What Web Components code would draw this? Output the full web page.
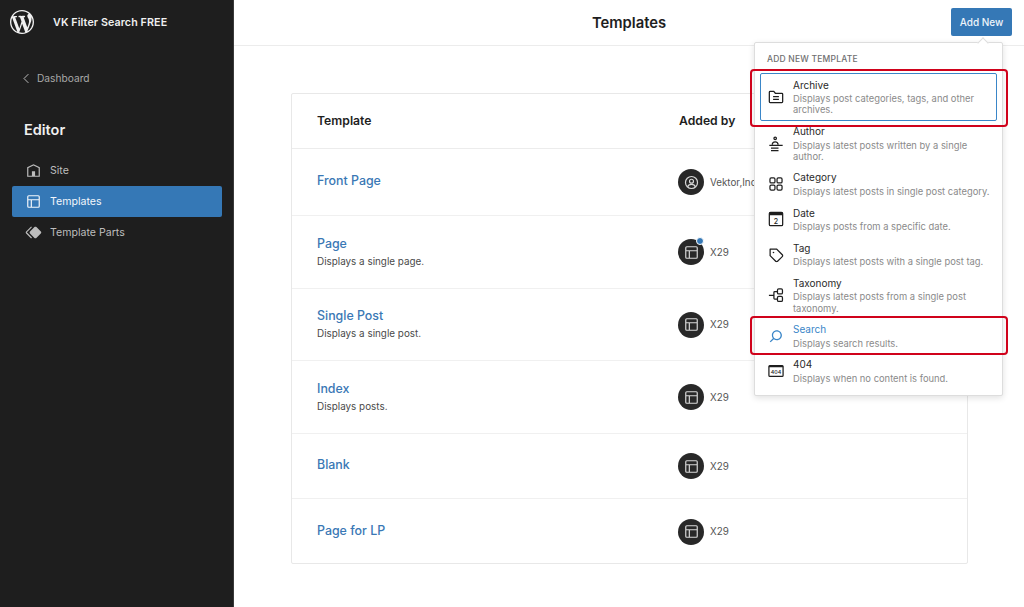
<!DOCTYPE html>
<html lang="en"><head><meta charset="utf-8"><title>Templates</title>
<style>
html,body{margin:0;padding:0;height:100%;background:#fff}
body{font-family:Inter,"Liberation Sans",sans-serif;color:#1e1e1e;overflow:hidden}
</style></head><body>
<wp-app>
  <wp-sidebar slot="side">
    <wp-nav-item icon="home">Site</wp-nav-item>
    <wp-nav-item icon="layout" active>Templates</wp-nav-item>
    <wp-nav-item icon="parts">Template Parts</wp-nav-item>
  </wp-sidebar>
  <wp-header slot="head"></wp-header>
  <wp-table slot="main">
    <wp-row avatar="person" author="Vektor,Inc" height="67"><span slot="title">Front Page</span></wp-row>
    <wp-row avatar="layout" author="X29" height="73" dot><span slot="title">Page</span>Displays a single page.</wp-row>
    <wp-row avatar="layout" author="X29" height="72"><span slot="title">Single Post</span>Displays a single post.</wp-row>
    <wp-row avatar="layout" author="X29" height="73"><span slot="title">Index</span>Displays posts.</wp-row>
    <wp-row avatar="layout" author="X29" height="65"><span slot="title">Blank</span></wp-row>
    <wp-row avatar="layout" author="X29" height="65" last><span slot="title">Page for LP</span></wp-row>
  </wp-table>
  <wp-popover slot="over">
    <wp-add-item icon="archive" focus mark><span slot="title">Archive</span>Displays post categories, tags, and other archives.</wp-add-item>
    <wp-add-item icon="author"><span slot="title">Author</span>Displays latest posts written by a single author.</wp-add-item>
    <wp-add-item icon="category"><span slot="title">Category</span>Displays latest posts in single post category.</wp-add-item>
    <wp-add-item icon="date"><span slot="title">Date</span>Displays posts from a specific date.</wp-add-item>
    <wp-add-item icon="tag"><span slot="title">Tag</span>Displays latest posts with a single post tag.</wp-add-item>
    <wp-add-item icon="taxonomy"><span slot="title">Taxonomy</span>Displays latest posts from a single post taxonomy.</wp-add-item>
    <wp-add-item icon="search" hover mark><span slot="title">Search</span>Displays search results.</wp-add-item>
    <wp-add-item icon="e404"><span slot="title">404</span>Displays when no content is found.</wp-add-item>
  </wp-popover>
</wp-app>
<script>
const ICONS={
 wp:'<path fill="currentColor" transform="scale(1.2)" d="M20 10c0-5.51-4.49-10-10-10C4.48 0 0 4.49 0 10c0 5.52 4.48 10 10 10 5.51 0 10-4.48 10-10zM7.78 15.37L4.37 6.22c.55-.02 1.17-.08 1.17-.08.5-.06.44-1.13-.06-1.11 0 0-1.45.11-2.37.11-.18 0-.37 0-.58-.01C4.12 2.69 6.87 1.11 10 1.11c2.33 0 4.45.87 6.05 2.34-.68-.11-1.65.39-1.65 1.58 0 .74.45 1.36.9 2.1.35.61.55 1.36.55 2.46 0 1.49-1.4 5-1.4 5l-3.03-8.37c.54-.02.82-.17.82-.17.5-.05.44-1.25-.06-1.22 0 0-1.44.12-2.38.12-.87 0-2.33-.12-2.33-.12-.5-.03-.56 1.2-.06 1.22l.92.08 1.26 3.41zM17.41 10c.24-.64.74-1.87.43-4.25.7 1.29 1.05 2.71 1.05 4.25 0 3.29-1.73 6.24-4.4 7.78.97-2.59 1.94-5.2 2.92-7.78zM6.1 18.09C3.12 16.65 1.11 13.53 1.11 10c0-1.3.23-2.48.72-3.59C3.25 10.3 4.67 14.2 6.1 18.09zm4.03-6.63l2.58 6.98c-.86.29-1.76.45-2.71.45-.79 0-1.57-.11-2.29-.33.81-2.38 1.62-4.74 2.42-7.1z"/>',
 home:'<path fill="currentColor" d="M12 4L4 7.9V20h16V7.9L12 4zm6.5 14.5H14V13h-4v5.5H5.5V8.8L12 5.7l6.5 3.1v9.7z"/>',
 layout:'<path fill="currentColor" d="M18 5.5H6a.5.5 0 00-.5.5v3h13V6a.5.5 0 00-.5-.5zm.5 5H10v8h8a.5.5 0 00.5-.5v-7.5zm-10 0h-3V18a.5.5 0 00.5.5h2.5v-8zM6 4h12a2 2 0 012 2v12a2 2 0 01-2 2H6a2 2 0 01-2-2V6a2 2 0 012-2z"/>',
 parts:'<path fill="currentColor" d="M21.3 10.8l-5.6-5.6c-.7-.7-1.8-.7-2.5 0l-5.6 5.6c-.7.7-.7 1.8 0 2.5l5.6 5.6c.3.3.8.5 1.2.5s.9-.2 1.2-.5l5.6-5.6c.8-.7.8-1.9.1-2.5zm-17.6 1L10 5.5l-1-1-6.3 6.3c-.7.7-.7 1.8 0 2.5L9 19.5l1.1-1.1-6.3-6.3c-.2 0-.2-.2-.1-.3z"/>',
 person:'<g fill="none" stroke="currentColor" stroke-width="1.5"><circle cx="12" cy="12" r="7.6"/><circle cx="12" cy="10.4" r="2.5"/><path d="M7.2 17.4c.5-2 2.2-3 4.8-3s4.3 1 4.8 3"/></g>',
 archive:'<g fill="none" stroke="currentColor" stroke-width="1.5"><path d="M4 6.3a1 1 0 011-1h4.300l1.900 2.200H19a1 1 0 011 1v9.200a1 1 0 01-1 1H5a1 1 0 01-1-1z"/><path d="M8.500 11.500h7M8.500 14.800h7"/></g>',
 author:'<g fill="none" stroke="currentColor" stroke-width="1.5"><circle cx="11" cy="5.2" r="1.5"/><path d="M7.500 13c0-2.300 1.300-3.500 3.500-3.500s3.500 1.200 3.500 3.500"/><path d="M4 13.500h16M6 16.800h9M6 20h9"/></g>',
 category:'<g fill="none" stroke="currentColor" stroke-width="1.5"><rect x="4.75" y="4.75" width="6" height="6" rx="1.5"/><rect x="13.25" y="4.75" width="6" height="6" rx="1.5"/><rect x="4.75" y="13.25" width="6" height="6" rx="1.5"/><rect x="13.25" y="13.25" width="6" height="6" rx="1.5"/></g>',
 date:'<rect x="4" y="4" width="16" height="16" rx="1.5" fill="none" stroke="currentColor" stroke-width="1.5"/><rect x="4" y="4" width="16" height="3.5" fill="currentColor"/><text x="12" y="17.5" font-size="8.5" font-family="Inter,sans-serif" font-weight="500" text-anchor="middle" fill="currentColor">2</text>',
 tag:'<path fill="currentColor" d="M20.1 11.2l-6.7-6.7c-.1-.1-.3-.2-.5-.2H5c-.4-.1-.8.3-.8.7v7.8c0 .2.1.4.2.5l6.7 6.7c.2.2.5.4.7.5s.6.2.9.2c.3 0 .6-.1.9-.2.3-.1.5-.3.8-.5l5.6-5.6c.4-.4.7-1 .7-1.6.1-.6-.2-1.2-.7-1.6zM19 13.4L13.4 19c-.1.1-.2.1-.3.2-.2.1-.4.1-.6 0-.1 0-.2-.1-.3-.2l-6.5-6.5V5.8h6.8l6.5 6.5c.2.2.2.4.2.6 0 .1 0 .3-.2.5zM9 8c-.6 0-1 .4-1 1s.4 1 1 1 1-.4 1-1-.4-1-1-1z"/>',
 taxonomy:'<g fill="none" stroke="currentColor" stroke-width="1.5"><rect x="13.75" y="4.75" width="6" height="6" rx="1.5"/><rect x="13.75" y="13.75" width="6" height="6" rx="1.5"/><path d="M13.5 8H10.5a1 1 0 00-1 1v7a1 1 0 001 1h3M9.5 12.5H3.5"/></g>',
 search:'<path fill="currentColor" d="M13 5c-3.3 0-6 2.7-6 6 0 1.4.5 2.7 1.3 3.7l-3.8 3.8 1.1 1.1 3.8-3.8c1 .8 2.3 1.3 3.7 1.3 3.3 0 6-2.7 6-6S16.3 5 13 5zm0 10.5c-2.5 0-4.5-2-4.5-4.5s2-4.5 4.5-4.5 4.5 2 4.5 4.5-2 4.5-4.5 4.5z"/>',
 e404:'<rect x="3.5" y="5.5" width="17" height="13" rx="1.2" fill="none" stroke="currentColor" stroke-width="1.5"/><rect x="3.5" y="5.5" width="17" height="2" fill="currentColor"/><text x="12" y="15.5" font-size="6.4" font-family="Inter,sans-serif" font-weight="500" text-anchor="middle" fill="currentColor">404</text>',
 chev:'<path fill="none" stroke="currentColor" stroke-width="1.5" d="M15 5l-7 7 7 7"/>'
};
function def(name,html,extra){
  const t=document.createElement('template');t.innerHTML=html;
  customElements.define(name,class extends HTMLElement{
    constructor(){super();this.attachShadow({mode:'open'}).appendChild(t.content.cloneNode(true));}
    connectedCallback(){extra&&extra(this,this.shadowRoot);}
  });
}
def('wp-icon',`<style>:host{display:inline-flex;flex:none;width:var(--s,24px);height:var(--s,24px)}svg{width:100%;height:100%;display:block}</style><svg viewBox="0 0 24 24"></svg>`,
  (h,r)=>{r.querySelector('svg').innerHTML=ICONS[h.getAttribute('name')]||'';});
def('wp-app',`<style>
:host{display:grid;grid-template-columns:234px 1fr;grid-template-rows:46px 1fr;height:607px;position:relative}
.s{grid-row:1/3;display:flex}.s ::slotted(*){flex:1}
.h{display:flex}.h ::slotted(*){flex:1}
.m{padding:47px 56px 0 57px;min-width:0}
</style><div class="s"><slot name="side"></slot></div><div class="h"><slot name="head"></slot></div><div class="m"><slot name="main"></slot></div><slot name="over"></slot>`);
def('wp-sidebar',`<style>
:host{display:flex;flex-direction:column;background:#1e1e1e;color:#e0e0e0;border-right:1px solid #3a3a3a;box-sizing:border-box}
.brand{display:flex;align-items:center;gap:19px;height:44px;padding-left:10px;color:#f0f0f0;font-size:10.7px;font-weight:600;letter-spacing:.1px}
.back{display:flex;align-items:center;gap:3px;margin-top:24px;padding-left:19px;height:20px;font-size:10.2px;color:#a8a8a8;--s:15px;}
.back wp-icon{color:#c4c4c4}
h2{margin:32px 0 0 24px;font-size:14.5px;line-height:20px;font-weight:600;color:#f0f0f0}
nav{display:flex;flex-direction:column;margin:15px 11px 0 12px}
</style><div class="brand"><wp-icon name="wp" style="--s:24px"></wp-icon><span>VK Filter Search FREE</span></div>
<div class="back"><wp-icon name="chev"></wp-icon><span>Dashboard</span></div><h2>Editor</h2><nav><slot></slot></nav>`);
def('wp-nav-item',`<style>
:host{display:flex;align-items:center;gap:7px;height:31px;padding-left:12px;border-radius:2px;font-size:10.6px;color:#bdbdbd;--s:19px}
:host([active]){background:#3578b6;color:#f2f6fb}
</style><wp-icon></wp-icon><span><slot></slot></span>`,(h,r)=>{r.querySelector('wp-icon').shadowRoot.querySelector('svg').innerHTML=ICONS[h.getAttribute('icon')];});
def('wp-header',`<style>
:host{display:flex;align-items:center;justify-content:center;position:relative;border-bottom:1px solid #ececec;box-sizing:border-box;height:46px}
h1{margin:0;font-size:14.8px;font-weight:600;color:#1e1e1e}
button{position:absolute;right:12px;top:8px;width:61px;height:28px;border:0;border-radius:2px;background:#3578b6;color:#eef4fa;font:500 10px Inter,sans-serif;padding:0}
</style><h1>Templates</h1><button>Add New</button>`);
def('wp-table',`<style>
:host{display:block;border:1px solid #e8e8e8;border-radius:2px;background:#fff;box-sizing:border-box;height:471px}
.hd{display:grid;grid-template-columns:362px 1fr;align-items:center;padding:0 0 2px 25px;box-sizing:border-box;height:55px;border-bottom:1px solid #ececec;font-size:12.2px;font-weight:600;color:#1e1e1e}
</style><div class="hd"><span>Template</span><span>Added by</span></div><slot></slot>`);
def('wp-row',`<style>
:host{display:grid;grid-template-columns:361px 1fr;align-items:center;padding-left:25px;border-bottom:1px solid #f0f0f0;box-sizing:border-box}
:host([last]){border-bottom:0}
.w{padding-bottom:2px}
.t{font-size:12.4px;line-height:18px;font-weight:500;color:#3a78b5}
.d{font-size:9.9px;line-height:13px;color:#4a4a4a;margin-top:2px}
.d.e{display:none}
.a{display:flex;align-items:center;gap:6px;font-size:9.8px;color:#555;white-space:nowrap}
.c{width:26px;height:26px;border-radius:50%;background:#282828;color:#d8d8d8;display:flex;align-items:center;justify-content:center;--s:19px;position:relative}
.dot{display:none;position:absolute;right:0;top:-2px;width:6px;height:6px;border-radius:50%;background:#3578b6;border:1px solid #fff}
:host([dot]) .dot{display:block}
</style><div class="w"><div class="t"><slot name="title"></slot></div><div class="d"><slot></slot></div></div>
<div class="a"><div class="c"><wp-icon></wp-icon><i class="dot"></i></div><span class="n"></span></div>`,
(h,r)=>{h.style.height=h.getAttribute('height')+'px';
 const hasDesc=[...h.childNodes].some(n=>n.nodeType===3&&n.textContent.trim());
 if(!hasDesc)r.querySelector('.d').classList.add('e');
 r.querySelector('wp-icon').shadowRoot.querySelector('svg').innerHTML=ICONS[h.getAttribute('avatar')];r.querySelector('.n').textContent=h.getAttribute('author');});
def('wp-popover',`<style>
:host{position:absolute;left:754px;top:42px;width:249px;height:354px;box-sizing:border-box;background:#fff;border:1px solid #ddd;border-radius:2px;box-shadow:0 2px 6px rgba(0,0,0,.12);padding:0 5px;display:block}
.arrow{position:absolute;right:15px;top:-4px;width:7px;height:7px;background:#fff;border-left:1px solid #ddd;border-top:1px solid #ddd;transform:rotate(45deg)}
.h{height:30px;display:flex;align-items:center;padding-left:7px;font-size:8.5px;font-weight:500;letter-spacing:.2px;color:#6f6f6f;text-transform:uppercase;padding-top:1px;box-sizing:border-box}
</style><i class="arrow"></i><div class="h">Add New Template</div><slot></slot>`);
def('wp-add-item',`<style>
:host{display:flex;align-items:center;gap:7px;padding:3px 6px 4px 5px;min-height:35.3px;box-sizing:border-box;position:relative;border:1px solid transparent;border-radius:2px;--s:20px;color:#1e1e1e}
:host([focus]){border-color:#3a86c8;height:48px;padding-top:0;padding-bottom:0}
:host([hover]) .t,:host([hover]) wp-icon{color:#3a86c8}
.t{font-size:10px;line-height:12.5px;color:#2a2a2a}
.d{font-size:9.39px;line-height:11.25px;color:#8a8a8a;margin-top:2px}
.mark{display:none;position:absolute;left:-11.5px;right:-11.5px;top:-5.5px;bottom:-6.8px;border:2.5px solid #d0021b;border-radius:4px;pointer-events:none}
:host([mark]) .mark{display:block}
:host([hover]) .mark{top:-4.3px;bottom:-2.3px}
</style><wp-icon></wp-icon><div><div class="t"><slot name="title"></slot></div><div class="d"><slot></slot></div></div><i class="mark"></i>`,
(h,r)=>{r.querySelector('wp-icon').shadowRoot.querySelector('svg').innerHTML=ICONS[h.getAttribute('icon')];});
</script>
</body></html>
